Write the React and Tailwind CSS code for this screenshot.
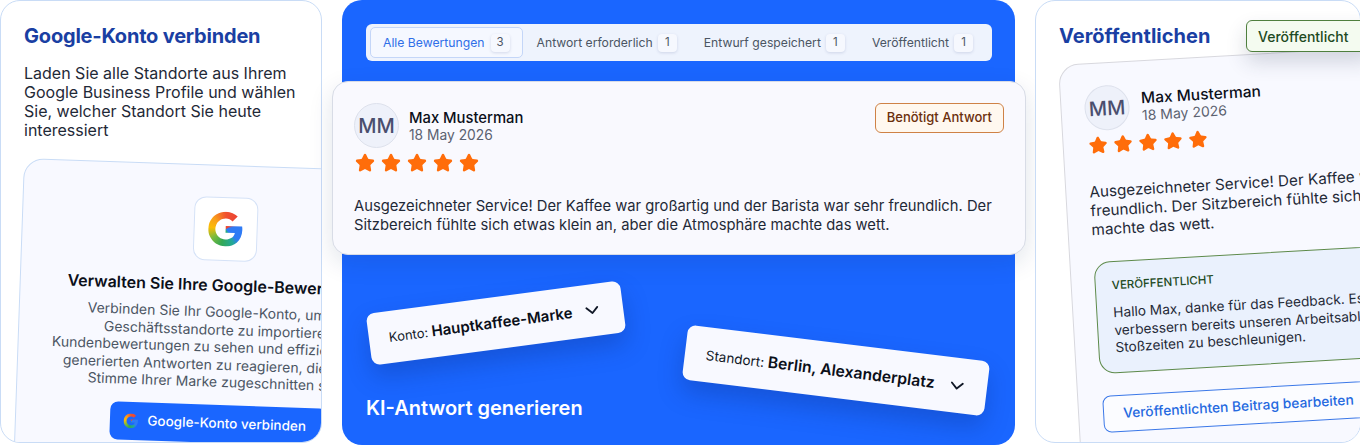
import React from "react";
import { Star, ChevronDown } from "lucide-react";

const gPath =
  "M22.56 12.25c0-.78-.07-1.53-.2-2.25H12v4.26h5.92c-.26 1.37-1.04 2.53-2.21 3.31v2.77h3.57c2.08-1.92 3.28-4.74 3.28-8.09z M12 23c2.97 0 5.46-.98 7.28-2.66l-3.57-2.77c-.98.66-2.23 1.06-3.71 1.06-2.86 0-5.29-1.93-6.16-4.53H2.18v2.84C3.99 20.53 7.7 23 12 23z M5.84 14.09c-.22-.66-.35-1.36-.35-2.09s.13-1.43.35-2.09V7.07H2.18C1.43 8.55 1 10.22 1 12s.43 3.45 1.18 4.93l2.85-2.22.81-.62z M12 5.38c1.62 0 3.06.56 4.21 1.64l3.15-3.15C17.45 2.09 14.97 1 12 1 7.7 1 3.99 3.47 2.18 7.07l3.66 2.84c.87-2.6 3.3-4.53 6.16-4.53z";

function GoogleG({ id, className }) {
  return (
    <svg viewBox="0 0 24 24" className={className}>
      <defs>
        <clipPath id={id}>
          <path d={gPath} />
        </clipPath>
      </defs>
      <g clipPath={`url(#${id})`}>
        <foreignObject x="0" y="0" width="24" height="24">
          <div className="w-[24px] h-[24px] bg-[conic-gradient(from_0deg,#f0512f_0deg,#ea4335_50deg,#2f7bf5_75deg,#2f7bf5_130deg,#22a89a_150deg,#34a853_195deg,#7dbb3c_235deg,#fbbc05_275deg,#f9a01b_310deg,#f0512f_360deg)]" />
        </foreignObject>
      </g>
    </svg>
  );
}

function Stars({ size = 20 }) {
  return (
    <div className="flex gap-[6px]">
      {[0, 1, 2, 3, 4].map((i) => (
        <Star key={i} size={size} className="text-[#ff6d0a] fill-[#ff6d0a]" strokeWidth={2} />
      ))}
    </div>
  );
}

function Avatar() {
  return (
    <div className="w-[45px] h-[45px] rounded-full bg-[#eef1fa] border border-[#dde1ec] flex items-center justify-center text-[20px] font-medium text-[#4a4e6e] shrink-0">
      MM
    </div>
  );
}

function Tab({ label, count, active }) {
  return (
    <div
      className={`flex items-center h-[31px] rounded-[5px] px-[12px] text-[12.2px] whitespace-nowrap shrink-0 ${
        active
          ? "gap-[6px] bg-[#f5f8ff] border border-[#c4d6f8] text-[#2f6fe8]"
          : "gap-[5px] border border-transparent text-[#4b5563]"
      }`}
    >
      <span className="pt-[1px]">{label}</span>
      <span className="w-[19px] h-[18px] mt-[1px] rounded-[4px] bg-[#f6f8fe] shadow-[0_1px_3px_rgba(60,80,140,0.18)] flex items-center justify-center text-[11.5px] text-[#4b5563]">
        {count}
      </span>
    </div>
  );
}

export default function App() {
  return (
    <div className="w-[1360px] h-[445px] bg-white overflow-hidden flex items-start font-['Inter',sans-serif]">
      {/* Left card */}
      <div className="w-[322px] h-[443px] shrink-0 rounded-[20px] border border-[#c9dcf6] bg-white overflow-hidden pt-[22px] pl-[23px]">
        <h2 className="text-[20px] leading-[26px] font-bold text-[#1a3fa3] tracking-[-0.2px]">Google-Konto verbinden</h2>
        <p className="mt-[15px] text-[16px] leading-[19px] text-[#1f2937] w-[280px]">
          Laden Sie alle Standorte aus Ihrem Google Business Profile und wählen Sie, welcher Standort Sie heute interessiert
        </p>
        <div className="mt-[18px] w-[408px] h-[320px] origin-top-left rotate-[2deg] rounded-[20px] border border-[#c9dcf6] bg-[#f8f9ff] pt-[31px] flex flex-col items-center">
          <div className="w-[64px] h-[64px] rounded-[12px] border border-[#d5e2f7] bg-white flex items-center justify-center">
            <GoogleG id="g1" className="w-[38px] h-[38px]" />
          </div>
          <h3 className="mt-[14px] -ml-[2px] text-[16px] leading-[20px] font-semibold text-[#0b0f19] whitespace-nowrap">
            Verwalten Sie Ihre Google-Bewertungen
          </h3>
          <p className="mt-[8px] -ml-[3px] text-[14px] leading-[17.5px] text-[#4b5563] text-center whitespace-nowrap">
            Verbinden Sie Ihr Google-Konto, um Ihre
            <br />
            Geschäftsstandorte zu importieren,
            <br />
            Kundenbewertungen zu sehen und effizient mit KI-
            <br />
            generierten Antworten zu reagieren, die auf die
            <br />
            Stimme Ihrer Marke zugeschnitten sind.
          </p>
          <div className="mt-[14px] -ml-[2px] w-[217px] h-[38px] rounded-[8px] bg-[#1a66ff] flex items-center gap-[9px] pl-[13px] text-[13.5px] font-medium text-white whitespace-nowrap">
            <GoogleG id="g2" className="w-[16px] h-[16px]" />
            Google-Konto verbinden
          </div>
        </div>
      </div>

      {/* Middle panel */}
      <div className="ml-[20px] w-[673px] h-[445px] shrink-0 rounded-[20px] bg-[#1a66ff] pt-[24px]">
        <div className="ml-[24px] mr-[23px] h-[37px] rounded-[6px] bg-[#eef3fd] flex items-center gap-[1px] pl-[4px]">
          <Tab label="Alle Bewertungen" count="3" active />
          <Tab label="Antwort erforderlich" count="1" />
          <Tab label="Entwurf gespeichert" count="1" />
          <Tab label="Veröffentlicht" count="1" />
        </div>
        <div className="mt-[20px] -ml-[10px] -mr-[11px] h-[174px] rounded-[16px] border border-[#d8dce6] bg-[#f9f9fe] shadow-[0_8px_24px_rgba(20,40,90,0.12)] pt-[21px] px-[21px]">
          <div className="flex items-start justify-between">
            <div>
              <div className="flex items-center gap-[10px]">
                <Avatar />
                <div>
                  <div className="text-[14.8px] leading-[18px] font-medium text-[#0b0f19]">Max Musterman</div>
                  <div className="text-[13.8px] leading-[16px] text-[#5b6170]">18 May 2026</div>
                </div>
              </div>
              <div className="mt-[5px] ml-[1px]">
                <Stars />
              </div>
            </div>
            <div className="h-[30px] px-[11px] rounded-[6px] border border-[#cf8246] bg-[#fff8ef] flex items-center text-[13px] font-medium text-[#6b2f0c] whitespace-nowrap">
              Benötigt Antwort
            </div>
          </div>
          <p className="mt-[24px] text-[14.75px] leading-[19px] text-[#1f2937] w-[648px]">
            Ausgezeichneter Service! Der Kaffee war großartig und der Barista war sehr freundlich. Der Sitzbereich fühlte sich etwas klein an, aber die Atmosphäre machte das wett.
          </p>
        </div>
        <div className="mt-[42px] h-[97px] pl-[26px] pr-[27px] flex justify-between items-start">
          <div className="w-[256px] h-[52px] pl-[20px] pr-[20px] -rotate-[7.5deg] rounded-[8px] bg-[#f8f9ff] flex items-center justify-between shadow-[0_12px_24px_rgba(10,40,120,0.28)] shrink-0">
            <span className="text-[13px] text-[#111827] whitespace-nowrap">
              Konto: <span className="text-[15px] font-semibold text-[#0b0f19]">Hauptkaffee-Marke</span>
            </span>
            <ChevronDown size={22} className="text-[#111827] shrink-0" strokeWidth={2} />
          </div>
          <div className="w-[304px] h-[55px] mt-[46px] pl-[21px] pr-[19px] rotate-[7deg] rounded-[8px] bg-[#f8f9ff] flex items-center justify-between shadow-[0_12px_24px_rgba(10,40,120,0.28)] shrink-0">
            <span className="text-[13.5px] text-[#111827] whitespace-nowrap">
              Standort: <span className="text-[15.75px] font-semibold text-[#0b0f19]">Berlin, Alexanderplatz</span>
            </span>
            <ChevronDown size={22} className="text-[#111827] shrink-0" strokeWidth={2} />
          </div>
        </div>
        <div className="pl-[24px] text-[20px] leading-[28px] font-semibold text-white">KI-Antwort generieren</div>
      </div>

      {/* Right card */}
      <div className="ml-[20px] w-[326px] h-[443px] shrink-0 rounded-[20px] border border-[#c9dcf6] bg-white overflow-hidden">
        <div className="flex items-start justify-between pt-[19px] pl-[23px] relative z-10">
          <h2 className="mt-[3px] text-[20px] leading-[26px] font-bold text-[#1a3fa3]">Veröffentlichen</h2>
          <div className="h-[32px] w-[126px] -mr-[12px] shrink-0 rounded-[6px] border border-[#4f7f3e] bg-[#f4fbf0] flex items-center pl-[11px] text-[14px] font-medium text-[#1d4a22] shadow-[0_10px_20px_rgba(40,50,80,0.18)]">
            Veröffentlicht
          </div>
        </div>
        <div className="mt-[13px] ml-[22px] w-[440px] h-[440px] origin-top-left -rotate-[3.3deg] rounded-[20px] border border-[#d8d8de] bg-[#f8f9ff] pt-[22px] pl-[23px]">
          <div className="flex items-center gap-[12px]">
            <Avatar />
            <div>
              <div className="text-[15.5px] leading-[18px] font-medium text-[#0b0f19]">Max Musterman</div>
              <div className="text-[14px] leading-[16px] text-[#5b6170]">18 May 2026</div>
            </div>
          </div>
          <div className="mt-[5px] ml-[2px]">
            <Stars size={19} />
          </div>
          <p className="mt-[27px] text-[15.25px] leading-[19px] text-[#1f2937] whitespace-nowrap">
            Ausgezeichneter Service! Der Kaffee war großartig und
            <br />
            freundlich. Der Sitzbereich fühlte sich etwas klein an, aber
            <br />
            machte das wett.
          </p>
          <div className="mt-[23px] w-[400px] h-[112px] rounded-[16px] border border-[#5d8a4a] bg-[#eaf1fd] pt-[15px] pl-[16px]">
            <div className="text-[11.5px] leading-[16px] font-medium text-[#1d4a22]">VERÖFFENTLICHT</div>
            <p className="mt-[11px] text-[13.7px] leading-[17.5px] text-[#1f2937] whitespace-nowrap">
              Hallo Max, danke für das Feedback. Es tut uns leid. Wir
              <br />
              verbessern bereits unseren Arbeitsablauf, um den Service zu
              <br />
              Stoßzeiten zu beschleunigen.
            </p>
          </div>
          <div className="mt-[22px] ml-[1px] w-[400px] h-[37px] rounded-[8px] border border-[#3b78e8] bg-[#fbfcff] flex items-center pl-[19px] text-[13.8px] font-medium text-[#2569e0]">
            Veröffentlichten Beitrag bearbeiten
          </div>
        </div>
      </div>
    </div>
  );
}
